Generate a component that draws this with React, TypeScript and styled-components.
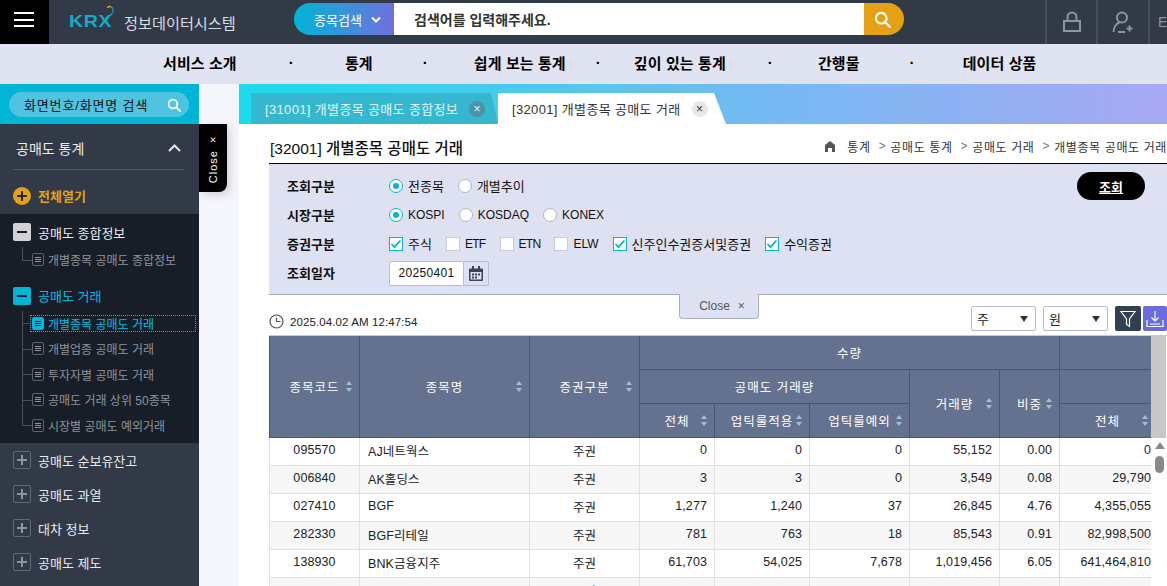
import React from 'react';
import styled, { createGlobalStyle } from 'styled-components';

const font = `"Liberation Sans", "Noto Sans CJK KR", sans-serif`;

const GlobalStyle = createGlobalStyle`
  html, body {
    margin: 0;
    padding: 0;
    background: #fff;
    font-family: ${font};
    overflow: hidden;
  }
  * { box-sizing: border-box; }
`;

const Page = styled.div`
  width: 1167px;
  height: 586px;
  display: flex;
  flex-direction: column;
  overflow: hidden;
`;

/* top bar */
const Header = styled.header`
  height: 44px;
  flex: none;
  display: flex;
  background: #323a48;
`;
const Burger = styled.div`
  width: 49px;
  background: #000;
  display: flex;
  flex-direction: column;
  gap: 4.5px;
  padding: 12px 0 0 14px;
  span { display: block; width: 20px; height: 2px; background: #fff; }
`;
const Logo = styled.div`
  width: 245px;
  padding-left: 20px;
  display: flex;
  align-items: center;
  position: relative;
  svg { position: absolute; left: 20px; top: 4px; }
`;
const LogoMark = styled.span`
  font: 700 17px/1 "Liberation Sans", sans-serif;
  color: #12acc9;
  letter-spacing: 0.5px;
  transform: scaleX(1.15);
  transform-origin: left;
  width: 55px;
  margin-top: -1px;
`;
const LogoText = styled.span`
  font-size: 15.2px;
  color: #d9dde6;
  white-space: nowrap;
`;
const SearchBar = styled.div`
  display: flex;
  width: 610px;
  height: 32px;
  margin-top: 3px;
`;
const SearchType = styled.div`
  width: 100px;
  padding-left: 20px;
  display: flex;
  align-items: center;
  gap: 9px;
  color: #fff;
  font-size: 13px;
  border-radius: 16px 0 0 16px;
  background: linear-gradient(90deg, #00b5d5, #7070e0);
`;
const SearchInput = styled.div`
  width: 470px;
  padding-left: 20px;
  background: #fff;
  display: flex;
  align-items: center;
  font-size: 14px;
  font-weight: 700;
  color: #333;
`;
const SearchButton = styled.div`
  width: 40px;
  background: #e5a114;
  border-radius: 0 16px 16px 0;
  display: flex;
  align-items: center;
  justify-content: center;
  padding-right: 4px;
`;
const HeaderTools = styled.div`
  margin-left: auto;
  display: flex;
`;
const ToolCell = styled.div<{ $w: number }>`
  width: ${(p) => p.$w}px;
  border-left: 2px solid #474e5c;
  display: flex;
  align-items: center;
  padding-left: ${(p) => (p.$w < 30 ? 8 : 0)}px;
  justify-content: ${(p) => (p.$w < 30 ? 'flex-start' : 'center')};
  color: #8b95a5;
  font-size: 14px;
`;

/* main menu */
const Nav = styled.nav`
  height: 40px;
  flex: none;
  background: #e0e4f2;
  display: flex;
  align-items: center;
  padding: 0 0 4px 163px;
`;
const NavItem = styled.span<{ $gap?: number }>`
  margin-left: ${(p) => p.$gap ?? 0}px;
  font-size: 15px;
  font-weight: 700;
  letter-spacing: 0.1px;
  color: #000;
  white-space: nowrap;
`;

const Body = styled.div`
  flex: 1;
  display: flex;
  min-height: 0;
`;

/* left menu */
const Sidebar = styled.aside`
  width: 199px;
  flex: none;
  position: relative;
  background: #323a48;
`;
const SideSearchWrap = styled.div`
  height: 40px;
  background: #00b5d5;
  padding: 8px 10px 7px 9px;
`;
const SideSearch = styled.div`
  height: 25px;
  border-radius: 13px;
  background: #4fc3df;
  display: flex;
  align-items: center;
  justify-content: space-between;
  padding: 0 8px 0 15px;
  font-size: 13px;
  letter-spacing: 0.85px;
  color: #111;
`;
const SideTop = styled.div`
  height: 90px;
  padding: 0 15px 0 13px;
`;
const SideTitle = styled.div`
  height: 46px;
  padding: 2px 3px 0;
  display: flex;
  align-items: center;
  justify-content: space-between;
  color: #e8eaee;
  font-size: 14px;
  border-bottom: 1px solid #4f5666;
`;
const OpenAll = styled.div`
  margin-top: 16px;
  display: flex;
  align-items: center;
  gap: 7px;
  color: #e5a114;
  font-size: 13px;
  font-weight: 700;
`;
const OpenIcon = styled.span`
  width: 18px;
  height: 18px;
  border-radius: 50%;
  background: #e5a114;
  position: relative;
  &::before, &::after {
    content: '';
    position: absolute;
    background: #222a36;
  }
  &::before { left: 4px; right: 4px; top: 8px; height: 2px; }
  &::after { top: 4px; bottom: 4px; left: 8px; width: 2px; }
`;
const DarkTree = styled.div`
  background: #181e28;
  padding: 3px 0 5px;
`;
const TreeHead = styled.div<{ $active?: boolean }>`
  height: 30px;
  display: flex;
  align-items: center;
  gap: 7px;
  padding-left: 13px;
  font-size: 13px;
  color: ${(p) => (p.$active ? '#00bfe0' : '#e8eaee')};
`;
const Toggle = styled.span<{ $kind: 'open' | 'active' | 'closed' }>`
  width: 18px;
  height: 18px;
  flex: none;
  border-radius: 2px;
  position: relative;
  background: ${(p) => (p.$kind === 'open' ? '#d2d2d2' : p.$kind === 'active' ? '#00b5d5' : 'transparent')};
  border: ${(p) => (p.$kind === 'closed' ? '1px solid #5e6778' : 'none')};
  &::before {
    content: '';
    position: absolute;
    left: ${(p) => (p.$kind === 'closed' ? 3 : 4)}px;
    right: ${(p) => (p.$kind === 'closed' ? 3 : 4)}px;
    top: ${(p) => (p.$kind === 'closed' ? 7 : 8)}px;
    height: 2px;
    background: ${(p) => (p.$kind === 'closed' ? '#8b95a5' : '#1a202a')};
  }
  &::after {
    content: '';
    display: ${(p) => (p.$kind === 'closed' ? 'block' : 'none')};
    position: absolute;
    top: 3px;
    bottom: 3px;
    left: 7px;
    width: 2px;
    background: #8b95a5;
  }
`;
const Children = styled.div`
  margin-bottom: 8px;
  &:last-child { margin-bottom: 0; }
`;
const Child = styled.div<{ $active?: boolean; $last?: boolean }>`
  height: 25.5px;
  position: relative;
  display: flex;
  align-items: center;
  gap: 4px;
  padding-left: 32px;
  font-size: 12px;
  white-space: nowrap;
  color: ${(p) => (p.$active ? '#00bfe0' : '#8f939a')};
  &::before {
    content: '';
    position: absolute;
    left: 22px;
    top: 0;
    height: ${(p) => (p.$last ? '50%' : '100%')};
    width: 1px;
    background: #4b505a;
  }
  &::after {
    content: '';
    position: absolute;
    left: 22px;
    top: 50%;
    width: 10px;
    height: 1px;
    background: #4b505a;
  }
`;
const ActiveOutline = styled.span`
  position: absolute;
  left: 30px;
  top: 4px;
  width: 166px;
  height: 17px;
  border: 1px dotted #8a8a8a;
  pointer-events: none;
`;
const DocIcon = styled.span<{ $active?: boolean }>`
  width: 12px;
  height: 13px;
  flex: none;
  border-radius: 2px;
  border: 1px solid ${(p) => (p.$active ? '#00b5d5' : '#5a6474')};
  background: ${(p) => (p.$active ? '#00b5d5' : 'transparent')};
  display: flex;
  flex-direction: column;
  justify-content: center;
  gap: 1px;
  padding: 0 2px;
  i { display: block; height: 1px; background: ${(p) => (p.$active ? '#10222e' : '#8f939a')}; }
`;
const ClosedHead = styled(TreeHead)`
  height: 34px;
`;
const SideClose = styled.div`
  position: absolute;
  left: 199px;
  top: 40px;
  width: 28px;
  height: 68px;
  background: #000;
  border-radius: 0 0 8px 0;
  box-shadow: 3px 3px 8px rgba(0, 0, 0, 0.15);
  color: #fff;
  font-size: 11px;
  letter-spacing: 1px;
  display: flex;
  align-items: center;
  justify-content: center;
  span { writing-mode: vertical-rl; transform: rotate(180deg); white-space: nowrap; }
`;
const Gutter = styled.div`
  width: 40px;
  flex: none;
  background: #f5f6fc;
`;

/* right side */
const Main = styled.main`
  flex: 1;
  min-width: 0;
  display: flex;
  flex-direction: column;
`;
const TabStrip = styled.div`
  height: 40px;
  flex: none;
  padding: 9px 0 0 12px;
  display: flex;
  background: linear-gradient(90deg, #1adcec 0%, #6cbdf0 50%, #a8a8f4 100%);
`;
const Tab = styled.div<{ $active?: boolean }>`
  height: 31px;
  display: flex;
  align-items: center;
  gap: 11px;
  font-size: 13px;
  letter-spacing: 0.35px;
  white-space: nowrap;
  color: ${(p) => (p.$active ? '#333' : '#e0f6fa')};
  background: ${(p) => (p.$active ? '#fff' : '#36b7d0')};
  width: ${(p) => (p.$active ? 228 : 247)}px;
  padding-left: 14px;
  clip-path: ${(p) => (p.$active
    ? 'polygon(0 0, 216px 0, 228px 100%, 0 100%)'
    : 'polygon(0 0, 240px 0, 247px 100%, 0 100%)')};
`;
const TabClose = styled.span<{ $active?: boolean }>`
  width: 16px;
  height: 16px;
  border-radius: 50%;
  flex: none;
  display: flex;
  align-items: center;
  justify-content: center;
  font-size: 12px;
  line-height: 1;
  letter-spacing: 0;
  background: ${(p) => (p.$active ? '#e8e8e8' : '#4f90a6')};
  color: ${(p) => (p.$active ? '#333' : '#e0f6fa')};
`;
const Content = styled.div`
  flex: 1;
  min-height: 0;
  padding-left: 30px;
  display: flex;
  flex-direction: column;
  background: #fff;
`;
const TitleRow = styled.div`
  height: 40px;
  flex: none;
  display: flex;
  align-items: center;
  justify-content: space-between;
  border-bottom: 1px solid #000;
`;
const Title = styled.h2`
  margin: 6px 0 0 1px;
  font-size: 15.5px;
  font-weight: 500;
  color: #111;
`;
const Crumbs = styled.div`
  display: flex;
  align-items: center;
  font-size: 12px;
  color: #333;
  white-space: nowrap;
  margin: 5px 0 0;
  letter-spacing: 0.62px;
  svg { margin-right: 11px; }
  i { font-style: normal; color: #777; margin: 0 4px 0 8px; }
`;
const FilterPanel = styled.section`
  height: 131px;
  flex: none;
  position: relative;
  background: #dee1f2;
  border-bottom: 1px solid #a8adc8;
  padding: 7px 0 0 18px;
`;
const FilterRow = styled.div`
  height: 29px;
  display: flex;
  align-items: center;
  font-size: 13px;
  color: #111;
`;
const FilterLabel = styled.span`
  width: 102px;
  font-weight: 700;
`;
const Option = styled.span<{ $latin?: boolean; $tight?: boolean }>`
  display: flex;
  align-items: center;
  gap: 5px;
  margin-right: 14px;
  white-space: nowrap;
  font-size: ${(p) => (p.$latin ? 12 : 13)}px;
  letter-spacing: ${(p) => (p.$tight ? -0.7 : 0)}px;
`;
const Radio = styled.span<{ $on?: boolean }>`
  width: 14px;
  height: 14px;
  border-radius: 50%;
  background: #fff;
  border: 1px solid ${(p) => (p.$on ? '#00b5d5' : '#b0b4c4')};
  display: flex;
  align-items: center;
  justify-content: center;
  &::before {
    content: '';
    width: 6px;
    height: 6px;
    border-radius: 50%;
    background: ${(p) => (p.$on ? '#00b5d5' : 'transparent')};
  }
`;
const Check = styled.span<{ $on?: boolean }>`
  width: 14px;
  height: 14px;
  background: #fff;
  border: 1px solid ${(p) => (p.$on ? '#00b5d5' : '#c8cbd8')};
  display: flex;
  align-items: center;
  justify-content: center;
`;
const DateField = styled.div`
  display: flex;
  height: 25px;
  margin-top: 1px;
`;
const DateInput = styled.span`
  width: 75px;
  background: #fff;
  border: 1px solid #b8bccc;
  border-radius: 2px 0 0 2px;
  display: flex;
  align-items: center;
  justify-content: center;
  font-size: 12px;
  letter-spacing: 0.3px;
`;
const DateButton = styled.span`
  width: 25px;
  border: 1px solid #b8bccc;
  border-left: none;
  border-radius: 0 2px 2px 0;
  display: flex;
  align-items: center;
  justify-content: center;
`;
const QueryButton = styled.button`
  position: absolute;
  right: 22px;
  top: 8px;
  width: 68px;
  height: 28px;
  border: none;
  border-radius: 14px;
  background: #000;
  color: #fff;
  font: 700 13px ${font};
  text-decoration: underline;
`;
const PanelClose = styled.div`
  position: absolute;
  left: 410px;
  top: 130px;
  width: 80px;
  height: 25px;
  z-index: 2;
  background: #dee1f2;
  border: 1px solid #a8adc8;
  border-top: none;
  border-radius: 0 0 4px 4px;
  display: flex;
  align-items: center;
  justify-content: center;
  gap: 8px;
  padding-left: 6px;
  font-size: 12px;
  color: #555;
`;
const Toolbar = styled.div`
  height: 40px;
  flex: none;
  display: flex;
  align-items: flex-end;
  padding-bottom: 4px;
`;
const Stamp = styled.div`
  display: flex;
  align-items: center;
  gap: 6px;
  font-size: 11.5px;
  color: #222;
  letter-spacing: 0.1px;
  margin-bottom: 2px;
`;
const ToolRight = styled.div`
  margin-left: auto;
  display: flex;
  gap: 7px;
`;
const Select = styled.div`
  width: 65px;
  height: 25px;
  background: #fff;
  border: 1px solid #b8bccc;
  border-radius: 2px;
  display: flex;
  align-items: center;
  justify-content: space-between;
  padding: 0 7px 0 5px;
  font-size: 13px;
  color: #222;
  &::after {
    content: '';
    border-left: 4.5px solid transparent;
    border-right: 4.5px solid transparent;
    border-top: 6px solid #333;
  }
`;
const IconButtons = styled.div`
  display: flex;
  gap: 2px;
`;
const IconButton = styled.div<{ $bg: string; $w: number }>`
  width: ${(p) => p.$w}px;
  height: 25px;
  border-radius: 2px;
  background: ${(p) => p.$bg};
  display: flex;
  align-items: center;
  justify-content: center;
`;

/* grid */
const GridWrap = styled.div`
  flex: 1;
  min-height: 0;
  display: flex;
  border-top: 1px solid #ccc;
`;
const GridClip = styled.div`
  width: 882px;
  overflow: hidden;
`;
const Table = styled.table`
  width: 886px;
  table-layout: fixed;
  border-collapse: collapse;
  font-size: 12.5px;
  color: #222;
`;
const HeadRow = styled.tr<{ $h: number }>`
  height: ${(p) => p.$h}px;
`;
const Th = styled.th`
  padding: 0;
  position: relative;
  background: #65728f;
  border: 1px solid #46587a;
  border-top: none;
  color: #fff;
  font-weight: 400;
  font-size: 12.5px;
  letter-spacing: 1px;
  white-space: nowrap;
`;
const Sort = styled.span`
  position: absolute;
  right: 6px;
  top: 50%;
  margin-top: -5.5px;
  width: 7px;
  height: 11px;
  &::before, &::after {
    content: '';
    position: absolute;
    left: 0;
    border-left: 3.5px solid transparent;
    border-right: 3.5px solid transparent;
  }
  &::before { top: 0; border-bottom: 4.5px solid #9fc0d8; }
  &::after { bottom: 0; border-top: 4.5px solid #9fc0d8; }
`;
const Tr = styled.tr`
  &:nth-child(even) td { background: #f7f7f7; }
`;
const Td = styled.td<{ $align?: string }>`
  height: 28px;
  padding: 0 ${(p) => (p.$align === 'right' ? 7 : 8)}px 2px;
  text-align: ${(p) => p.$align ?? 'center'};
  border: 1px solid #e0e0e0;
  border-top: none;
  background: #fff;
  white-space: nowrap;
  letter-spacing: 0.1px;
`;
const LastTd = styled(Td)`
  padding-right: 4px;
`;
const ScrollCol = styled.div`
  width: 15px;
  flex: none;
  position: relative;
`;
const ScrollHead = styled.div`
  height: 102px;
  background: #c8c8c8;
`;
const ScrollUp = styled.span`
  position: absolute;
  left: 4px;
  top: 106px;
  border-left: 5px solid transparent;
  border-right: 5px solid transparent;
  border-bottom: 7px solid #8a8a8a;
`;
const ScrollThumb = styled.span`
  position: absolute;
  left: 4px;
  top: 120px;
  width: 9px;
  height: 17px;
  border-radius: 5px;
  background: #8a8a8a;
`;

const Search = ({ size, color, width = 2 }: { size: number; color: string; width?: number }) => (
  <svg width={size} height={size} viewBox="0 0 16 16" fill="none" stroke={color} strokeWidth={width}>
    <circle cx="6.8" cy="6.8" r="5" />
    <path d="M10.6 10.6 15 15" strokeLinecap="round" />
  </svg>
);

const Tick = () => (
  <svg width="12" height="12" viewBox="0 0 12 12" fill="none" stroke="#00b5d5" strokeWidth="1.8">
    <path d="M1.5 6 4.5 9.2 10.5 2.5" />
  </svg>
);

const Doc = ({ active }: { active?: boolean }) => (
  <DocIcon $active={active}><i /><i /><i /></DocIcon>
);

const rows = [
  ['095570', 'AJ네트웍스', '주권', '0', '0', '0', '55,152', '0.00', '0'],
  ['006840', 'AK홀딩스', '주권', '3', '3', '0', '3,549', '0.08', '29,790'],
  ['027410', 'BGF', '주권', '1,277', '1,240', '37', '26,845', '4.76', '4,355,055'],
  ['282330', 'BGF리테일', '주권', '781', '763', '18', '85,543', '0.91', '82,998,500'],
  ['138930', 'BNK금융지주', '주권', '61,703', '54,025', '7,678', '1,019,456', '6.05', '641,464,810'],
  ['', '', '주권', '', '', '', '', '', ''],
];

const App: React.FC = () => (
  <Page>
    <GlobalStyle />
    <Header>
      <Burger><span /><span /><span /></Burger>
      <Logo>
        <svg width="50" height="22" viewBox="0 0 50 22" fill="none" strokeWidth="1.2">
          <path d="M36 14c5-1 9-5 8-9-.5-2-3-2.500-5-1.500" stroke="#12a3c4" />
          <path d="M38 3.500c1-1 2.500-1.500 4-1" stroke="#e5a114" />
        </svg>
        <LogoMark>KRX</LogoMark>
        <LogoText>정보데이터시스템</LogoText>
      </Logo>
      <SearchBar>
        <SearchType>
          종목검색
          <svg width="10" height="7" viewBox="0 0 10 7" fill="none" stroke="#fff" strokeWidth="2">
            <path d="M1 1.500 5 5.500 9 1.500" />
          </svg>
        </SearchType>
        <SearchInput>검색어를 입력해주세요.</SearchInput>
        <SearchButton><Search size={17} color="#fff" /></SearchButton>
      </SearchBar>
      <HeaderTools>
        <ToolCell $w={51}>
          <svg width="20" height="22" viewBox="0 0 20 22" fill="none" stroke="#8b95a5" strokeWidth="2">
            <rect x="2" y="10" width="16" height="10" />
            <path d="M5.500 10V6a4.500 4.500 0 0 1 9 0v4" />
          </svg>
        </ToolCell>
        <ToolCell $w={52}>
          <svg width="22" height="23" viewBox="0 0 22 23" fill="none" stroke="#8b95a5" strokeWidth="2">
            <circle cx="10" cy="6.500" r="5" />
            <path d="M1.500 21c0-5 3-8.500 6-9.500M6 21h7" />
            <path d="M17.500 14.500v6M14.500 17.500h6" />
          </svg>
        </ToolCell>
        <ToolCell $w={19}>E</ToolCell>
      </HeaderTools>
    </Header>

    <Nav>
      <NavItem>서비스 소개</NavItem>
      <NavItem $gap={52}>·</NavItem>
      <NavItem $gap={51}>통계</NavItem>
      <NavItem $gap={50}>·</NavItem>
      <NavItem $gap={46}>쉽게 보는 통계</NavItem>
      <NavItem $gap={30}>·</NavItem>
      <NavItem $gap={33}>깊이 있는 통계</NavItem>
      <NavItem $gap={42}>·</NavItem>
      <NavItem $gap={45}>간행물</NavItem>
      <NavItem $gap={50}>·</NavItem>
      <NavItem $gap={48}>데이터 상품</NavItem>
    </Nav>

    <Body>
      <Sidebar>
        <SideSearchWrap>
          <SideSearch>
            화면번호/화면명 검색
            <Search size={14} color="#fff" />
          </SideSearch>
        </SideSearchWrap>
        <SideTop>
          <SideTitle>
            공매도 통계
            <svg width="13" height="8" viewBox="0 0 13 8" fill="none" stroke="#e8eaee" strokeWidth="2">
              <path d="M1 7 6.500 1.500 12 7" />
            </svg>
          </SideTitle>
          <OpenAll><OpenIcon />전체열기</OpenAll>
        </SideTop>
        <DarkTree>
          <TreeHead><Toggle $kind="open" />공매도 종합정보</TreeHead>
          <Children>
            <Child $last><Doc />개별종목 공매도 종합정보</Child>
          </Children>
          <TreeHead $active><Toggle $kind="active" />공매도 거래</TreeHead>
          <Children>
            <Child $active><Doc active />개별종목 공매도 거래<ActiveOutline /></Child>
            <Child><Doc />개별업종 공매도 거래</Child>
            <Child><Doc />투자자별 공매도 거래</Child>
            <Child><Doc />공매도 거래 상위 50종목</Child>
            <Child $last><Doc />시장별 공매도 예외거래</Child>
          </Children>
        </DarkTree>
        <ClosedHead><Toggle $kind="closed" />공매도 순보유잔고</ClosedHead>
        <ClosedHead><Toggle $kind="closed" />공매도 과열</ClosedHead>
        <ClosedHead><Toggle $kind="closed" />대차 정보</ClosedHead>
        <ClosedHead><Toggle $kind="closed" />공매도 제도</ClosedHead>
        <SideClose><span>Close ×</span></SideClose>
      </Sidebar>
      <Gutter />

      <Main>
        <TabStrip>
          <Tab>[31001] 개별종목 공매도 종합정보<TabClose>×</TabClose></Tab>
          <Tab $active>[32001] 개별종목 공매도 거래<TabClose $active>×</TabClose></Tab>
        </TabStrip>
        <Content>
          <TitleRow>
            <Title>[32001] 개별종목 공매도 거래</Title>
            <Crumbs>
              <svg width="12" height="11" viewBox="0 0 12 11" fill="#555">
                <path d="M6 0 11 4V11H8V7H4V11H1V4Z" />
              </svg>
              통계<i>&gt;</i>공매도 통계<i>&gt;</i>공매도 거래<i>&gt;</i>개별종목 공매도 거래
            </Crumbs>
          </TitleRow>
          <FilterPanel>
            <FilterRow>
              <FilterLabel>조회구분</FilterLabel>
              <Option><Radio $on />전종목</Option>
              <Option><Radio />개별추이</Option>
            </FilterRow>
            <FilterRow>
              <FilterLabel>시장구분</FilterLabel>
              <Option $latin><Radio $on />KOSPI</Option>
              <Option $latin><Radio />KOSDAQ</Option>
              <Option $latin><Radio />KONEX</Option>
            </FilterRow>
            <FilterRow>
              <FilterLabel>증권구분</FilterLabel>
              <Option><Check $on><Tick /></Check>주식</Option>
              <Option $latin $tight><Check />ETF</Option>
              <Option $latin $tight><Check />ETN</Option>
              <Option $latin><Check />ELW</Option>
              <Option><Check $on><Tick /></Check>신주인수권증서및증권</Option>
              <Option><Check $on><Tick /></Check>수익증권</Option>
            </FilterRow>
            <FilterRow>
              <FilterLabel>조회일자</FilterLabel>
              <DateField>
                <DateInput>20250401</DateInput>
                <DateButton>
                  <svg width="14" height="15" viewBox="0 0 14 15">
                    <path d="M1 2.500h12a1 1 0 0 1 1 1V14a1 1 0 0 1-1 1H1a1 1 0 0 1-1-1V3.500a1 1 0 0 1 1-1Z" fill="#3a4454" />
                    <rect x="1.500" y="6" width="11" height="7.500" fill="#dee1f2" />
                    <path d="M3 0h2v3H3zM9 0h2v3H9z" fill="#3a4454" />
                    <path d="M3 7.500h2v2H3zM6 7.500h2v2H6zM9 7.500h2v2H9zM3 10.500h2v2H3zM6 10.500h2v2H6z" fill="#3a4454" />
                  </svg>
                </DateButton>
              </DateField>
            </FilterRow>
            <QueryButton>조회</QueryButton>
            <PanelClose>Close <span>×</span></PanelClose>
          </FilterPanel>
          <Toolbar>
            <Stamp>
              <svg width="15" height="15" viewBox="0 0 15 15" fill="none" stroke="#555" strokeWidth="1.2">
                <circle cx="7.500" cy="7.500" r="6.500" />
                <path d="M7.500 3.500v4h4" />
              </svg>
              2025.04.02 AM 12:47:54
            </Stamp>
            <ToolRight>
              <Select>주</Select>
              <Select>원</Select>
              <IconButtons>
                <IconButton $bg="#333f55" $w={26}>
                  <svg width="16" height="18" viewBox="0 0 16 18" fill="none" stroke="#fff" strokeWidth="1.2">
                    <path d="M1 1.500h14L9.500 9v7.500l-3-2V9Z" />
                  </svg>
                </IconButton>
                <IconButton $bg="#6b6be0" $w={24}>
                  <svg width="18" height="18" viewBox="0 0 18 18" fill="none" stroke="#fff" strokeWidth="1.2">
                    <path d="M9 1v10M5.500 7.500 9 11l3.500-3.500M1 10v6.500h16V10M4 14h10" />
                  </svg>
                </IconButton>
              </IconButtons>
            </ToolRight>
          </Toolbar>
          <GridWrap>
            <GridClip>
              <Table>
                <colgroup>
                  <col width="90" />
                  <col width="170" />
                  <col width="110" />
                  <col width="75" />
                  <col width="95" />
                  <col width="100" />
                  <col width="90" />
                  <col width="60" />
                  <col width="96" />
                </colgroup>
                <thead>
                  <HeadRow $h={33}>
                    <Th rowSpan={3}>종목코드<Sort /></Th>
                    <Th rowSpan={3}>종목명<Sort /></Th>
                    <Th rowSpan={3}>증권구분<Sort /></Th>
                    <Th colSpan={5}>수량</Th>
                    <Th />
                  </HeadRow>
                  <HeadRow $h={34}>
                    <Th colSpan={3}>공매도 거래량</Th>
                    <Th rowSpan={2}>거래량<Sort /></Th>
                    <Th rowSpan={2}>비중<Sort /></Th>
                    <Th />
                  </HeadRow>
                  <HeadRow $h={34}>
                    <Th>전체<Sort /></Th>
                    <Th>업틱룰적용<Sort /></Th>
                    <Th>업틱룰예외<Sort /></Th>
                    <Th>전체<Sort /></Th>
                  </HeadRow>
                </thead>
                <tbody>
                  {rows.map((r, i) => (
                    <Tr key={i}>
                      <Td>{r[0]}</Td>
                      <Td $align="left">{r[1]}</Td>
                      <Td>{r[2]}</Td>
                      <Td $align="right">{r[3]}</Td>
                      <Td $align="right">{r[4]}</Td>
                      <Td $align="right">{r[5]}</Td>
                      <Td $align="right">{r[6]}</Td>
                      <Td $align="right">{r[7]}</Td>
                      <LastTd $align="right">{r[8]}</LastTd>
                    </Tr>
                  ))}
                </tbody>
              </Table>
            </GridClip>
            <ScrollCol>
              <ScrollHead />
              <ScrollUp />
              <ScrollThumb />
            </ScrollCol>
          </GridWrap>
        </Content>
      </Main>
    </Body>
  </Page>
);

export default App;
